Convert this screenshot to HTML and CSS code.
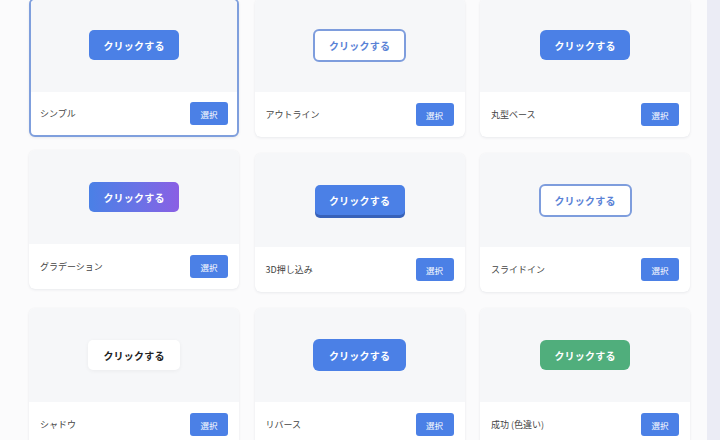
FILE: index.html
```html
<!DOCTYPE html>
<html lang="ja">
<head>
<meta charset="utf-8">
<link rel="stylesheet" href="styles.css">
</head>
<body>
<div class="layout">
  <main class="main">
    <div class="grid">
      <div class="card selected">
        <div class="preview"><span class="btn btn-simple">クリックする</span></div>
        <div class="footer"><span class="label">シンプル</span><span class="pick">選択</span></div>
      </div>
      <div class="card">
        <div class="preview"><span class="btn btn-outline">クリックする</span></div>
        <div class="footer"><span class="label">アウトライン</span><span class="pick">選択</span></div>
      </div>
      <div class="card">
        <div class="preview"><span class="btn btn-round">クリックする</span></div>
        <div class="footer"><span class="label">丸型ベース</span><span class="pick">選択</span></div>
      </div>
      <div class="card lifted">
        <div class="preview"><span class="btn btn-gradient">クリックする</span></div>
        <div class="footer"><span class="label">グラデーション</span><span class="pick">選択</span></div>
      </div>
      <div class="card">
        <div class="preview"><span class="btn btn-3d">クリックする</span></div>
        <div class="footer"><span class="label">3D押し込み</span><span class="pick">選択</span></div>
      </div>
      <div class="card">
        <div class="preview"><span class="btn btn-outline">クリックする</span></div>
        <div class="footer"><span class="label">スライドイン</span><span class="pick">選択</span></div>
      </div>
      <div class="card">
        <div class="preview"><span class="btn btn-shadow">クリックする</span></div>
        <div class="footer"><span class="label">シャドウ</span><span class="pick">選択</span></div>
      </div>
      <div class="card">
        <div class="preview"><span class="btn btn-reverse">クリックする</span></div>
        <div class="footer"><span class="label">リバース</span><span class="pick">選択</span></div>
      </div>
      <div class="card">
        <div class="preview"><span class="btn btn-success">クリックする</span></div>
        <div class="footer"><span class="label">成功 (色違い)</span><span class="pick">選択</span></div>
      </div>
    </div>
  </main>
  <aside class="side"></aside>
</div>
</body>
</html>
```
FILE: styles.css
```css
* { box-sizing: border-box; }
html, body { margin: 0; padding: 0; }
body {
  background: #fbfbfc;
  font-family: "Noto Sans CJK JP", "Noto Sans", sans-serif;
  color: #333;
  height: 440px;
  overflow: hidden;
}
.layout {
  display: flex;
  height: 440px;
}
.main {
  flex: 1;
  padding-left: 29px;
}
.side {
  width: 13px;
  background: #ebecf5;
}
.grid {
  margin-top: -2px;
  display: grid;
  grid-template-columns: repeat(3, 210px);
  column-gap: 15.5px;
  row-gap: 16px;
}
.card {
  background: #fff;
  border-radius: 6px;
  box-shadow: 0 1px 3px rgba(20, 30, 60, 0.07), 0 0 1px rgba(20, 30, 60, 0.06);
  overflow: hidden;
}
.card.selected {
  border: 2px solid #7f9fdd;
}
.card.lifted {
  transform: translateY(-3px);
}
.preview {
  height: 94px;
  background: #f6f7f9;
  display: flex;
  align-items: center;
  justify-content: center;
}
.card.selected .preview { height: 92px; padding-bottom: 2px; }
.footer {
  height: 45px;
  display: flex;
  align-items: center;
  justify-content: space-between;
  padding: 0 11px;
}
.card.selected .footer { height: 43px; padding: 0 9px; }
.label {
  font-size: 9px;
  color: #444;
}
.pick {
  width: 38px;
  height: 23px;
  border-radius: 3px;
  background: #4b80e6;
  color: #fff;
  font-size: 8.5px;
  display: flex;
  align-items: center;
  justify-content: center;
}
.btn {
  display: flex;
  align-items: center;
  justify-content: center;
  width: 90px;
  height: 30px;
  font-size: 10px;
  font-weight: 700;
  border-radius: 5px;
  color: #fff;
  background: #4b80e6;
  letter-spacing: 0.2px;
}
.btn-outline {
  width: 93px;
  height: 33px;
  background: #fff;
  border: 2px solid #7e9ddd;
  color: #5a82d6;
  border-radius: 6px;
}
.btn-round { border-radius: 6px; }
.btn-gradient {
  background: linear-gradient(90deg, #4a80e6 0%, #6a72e6 55%, #8a5fe4 100%);
}
.btn-3d {
  box-shadow: 0 3px 0 #3862b9;
}
.btn-shadow {
  background: #fff;
  color: #222;
  width: 92px;
  box-shadow: 0 1px 4px rgba(0, 0, 0, 0.05);
}
.btn-reverse {
  width: 93px;
  height: 32px;
  border-radius: 6px;
}
.btn-success {
  background: #50ae7c;
  border-radius: 6px;
}
```
